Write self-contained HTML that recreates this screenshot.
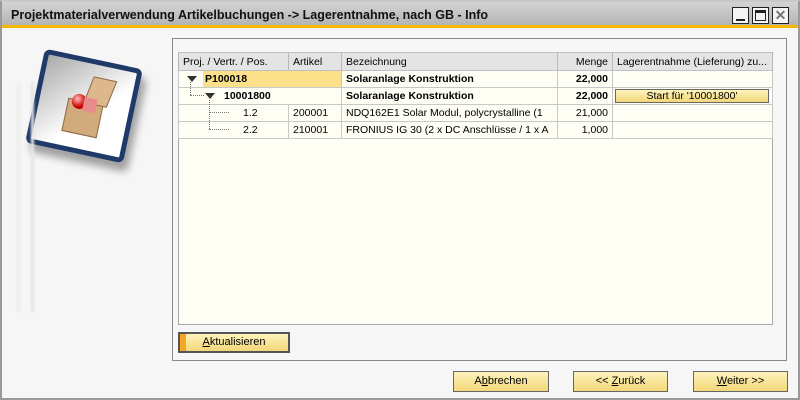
<!DOCTYPE html>
<html><head><meta charset="utf-8"><style>
*{box-sizing:border-box;margin:0;padding:0}
body{width:800px;height:400px;overflow:hidden;background:#fff;font-family:"Liberation Sans",sans-serif;font-size:11px;color:#000;position:relative}
.win{position:absolute;left:0;top:0;width:800px;height:400px;border:2px solid #9a9a9a;border-top-color:#c8c8c8;background:#f6f6f6}
.title{position:absolute;left:2px;top:2px;width:796px;height:26px;background:linear-gradient(#d4d4d4,#b4b4b4);border-bottom:3px solid #f5b800;font-weight:bold;font-size:12.5px;padding:6px 0 0 9px;color:#111}
.wb{position:absolute;top:7px;width:17px;height:17px;border:1px solid #222;background:#f4f4f4}
.grp{position:absolute;left:172px;top:38px;width:615px;height:323px;border:1px solid #8a8a8a;background:#f6f6f6}
table{position:absolute;left:178px;top:52px;width:595px;border-collapse:collapse;background:#fffef4;font-size:10.5px}
.tbl{position:absolute;left:178px;top:52px;width:595px;height:273px;border:1px solid #a8a8a8;background:#fffef4}
td,th{height:17px;border:1px solid #c8c8c8;padding:0 4px;white-space:nowrap;overflow:hidden;position:relative}
th{background:#e4e4e4;font-weight:normal;text-align:left;height:18px;border-color:#c0c0c0 #b8b8b8}
.r{text-align:right}
.b{font-weight:bold}
.btn{position:absolute;height:21px;border:1px solid #666;background:linear-gradient(#fdf3bc,#f3d778);font-size:11px;text-align:center;line-height:19px}
.tri{display:inline-block;width:0;height:0;border-left:5px solid transparent;border-right:5px solid transparent;border-top:6px solid #333;vertical-align:middle}
.dv{position:absolute;border-left:1px dotted #777}
.dh{position:absolute;border-top:1px dotted #777}
</style></head><body>
<div class="win"></div>
<div class="title">Projektmaterialverwendung Artikelbuchungen -&gt; Lagerentnahme, nach GB - Info</div>
<div class="wb" style="left:732px"><div style="position:absolute;left:3px;bottom:2px;width:9px;height:2px;background:#222"></div></div>
<div class="wb" style="left:752px"><div style="position:absolute;left:2px;top:2px;width:11px;height:11px;border:1px solid #222;border-top-width:3px"></div></div>
<div class="wb" style="left:772px;font-size:14px;line-height:14px;text-align:center;color:#777;font-weight:bold">✕</div>
<!-- icon -->
<div style="position:absolute;left:34px;top:58px;width:100px;height:96px;transform:rotate(12deg);border-radius:6px;border:5px solid #1f3a68;background:linear-gradient(135deg,#aaa,#fff 60%);box-shadow:6px 8px 8px rgba(0,0,0,.35)">
<div style="position:absolute;left:28px;top:38px;width:36px;height:34px;background:#d2ab7c;border:1px solid #8a6a48"></div>
<div style="position:absolute;left:46px;top:12px;width:24px;height:28px;background:#dcb88c;border:1px solid #8a6a48;transform:skewX(-10deg)"></div>
<div style="position:absolute;left:32px;top:32px;width:15px;height:15px;border-radius:50%;background:radial-gradient(circle at 35% 35%,#fbb,#c00 60%,#600)"></div>
<div style="position:absolute;left:44px;top:34px;width:13px;height:14px;background:#e98b8b"></div>
</div>
<div style="position:absolute;left:16px;top:82px;width:5px;height:230px;background:#efefef;filter:blur(1px)"></div>
<div style="position:absolute;left:31px;top:82px;width:3px;height:230px;background:#e4e4e4;filter:blur(1px)"></div>
<div class="grp"></div>
<div class="tbl"></div>
<table>
<tr><th style="width:110px">Proj. / Vertr. / Pos.</th><th style="width:53px">Artikel</th><th style="width:216px">Bezeichnung</th><th class="r" style="width:55px">Menge</th><th>Lagerentnahme (Lieferung) zu...</th></tr>
<tr><td colspan="2" style="padding:0"><span class="tri" style="margin:0 6px 0 8px"></span><span class="b" style="display:inline-block;background:#fde08a;width:138px;padding-left:2px;line-height:16px">P100018</span></td><td class="b">Solaranlage Konstruktion</td><td class="r b">22,000</td><td></td></tr>
<tr><td colspan="2" style="padding-left:26px"><span class="tri" style="margin-right:9px"></span><span class="b">10001800</span></td><td class="b">Solaranlage Konstruktion</td><td class="r b">22,000</td><td style="padding:1px 3px 1px 2px"><div style="height:14px;border:1px solid #666;background:linear-gradient(#fdf3bc,#f3d778);text-align:center;line-height:12px">Start für '10001800'</div></td></tr>
<tr><td style="padding-left:64px">1.2</td><td>200001</td><td>NDQ162E1 Solar Modul, polycrystalline (1</td><td class="r">21,000</td><td></td></tr>
<tr><td style="padding-left:64px">2.2</td><td>210001</td><td>FRONIUS IG 30 (2 x DC Anschlüsse / 1 x A</td><td class="r">1,000</td><td></td></tr>
</table>
<div class="dv" style="left:190px;top:82px;height:13px"></div>
<div class="dh" style="left:190px;top:95px;width:14px"></div>
<div class="dv" style="left:209px;top:100px;height:29px"></div>
<div class="dh" style="left:209px;top:112px;width:20px"></div>
<div class="dh" style="left:209px;top:129px;width:20px"></div>
<div class="btn" style="left:178px;top:332px;width:112px;border:2px solid #555;background:linear-gradient(90deg,#f5a623 0,#f5a623 6px,transparent 6px),linear-gradient(#fdf3bc,#f3d778);line-height:17px"><u>A</u>ktualisieren</div>
<div class="btn" style="left:453px;top:371px;width:96px">A<u>b</u>brechen</div>
<div class="btn" style="left:573px;top:371px;width:95px">&lt;&lt; <u>Z</u>urück</div>
<div class="btn" style="left:693px;top:371px;width:95px"><u>W</u>eiter &gt;&gt;</div>
</body></html>
